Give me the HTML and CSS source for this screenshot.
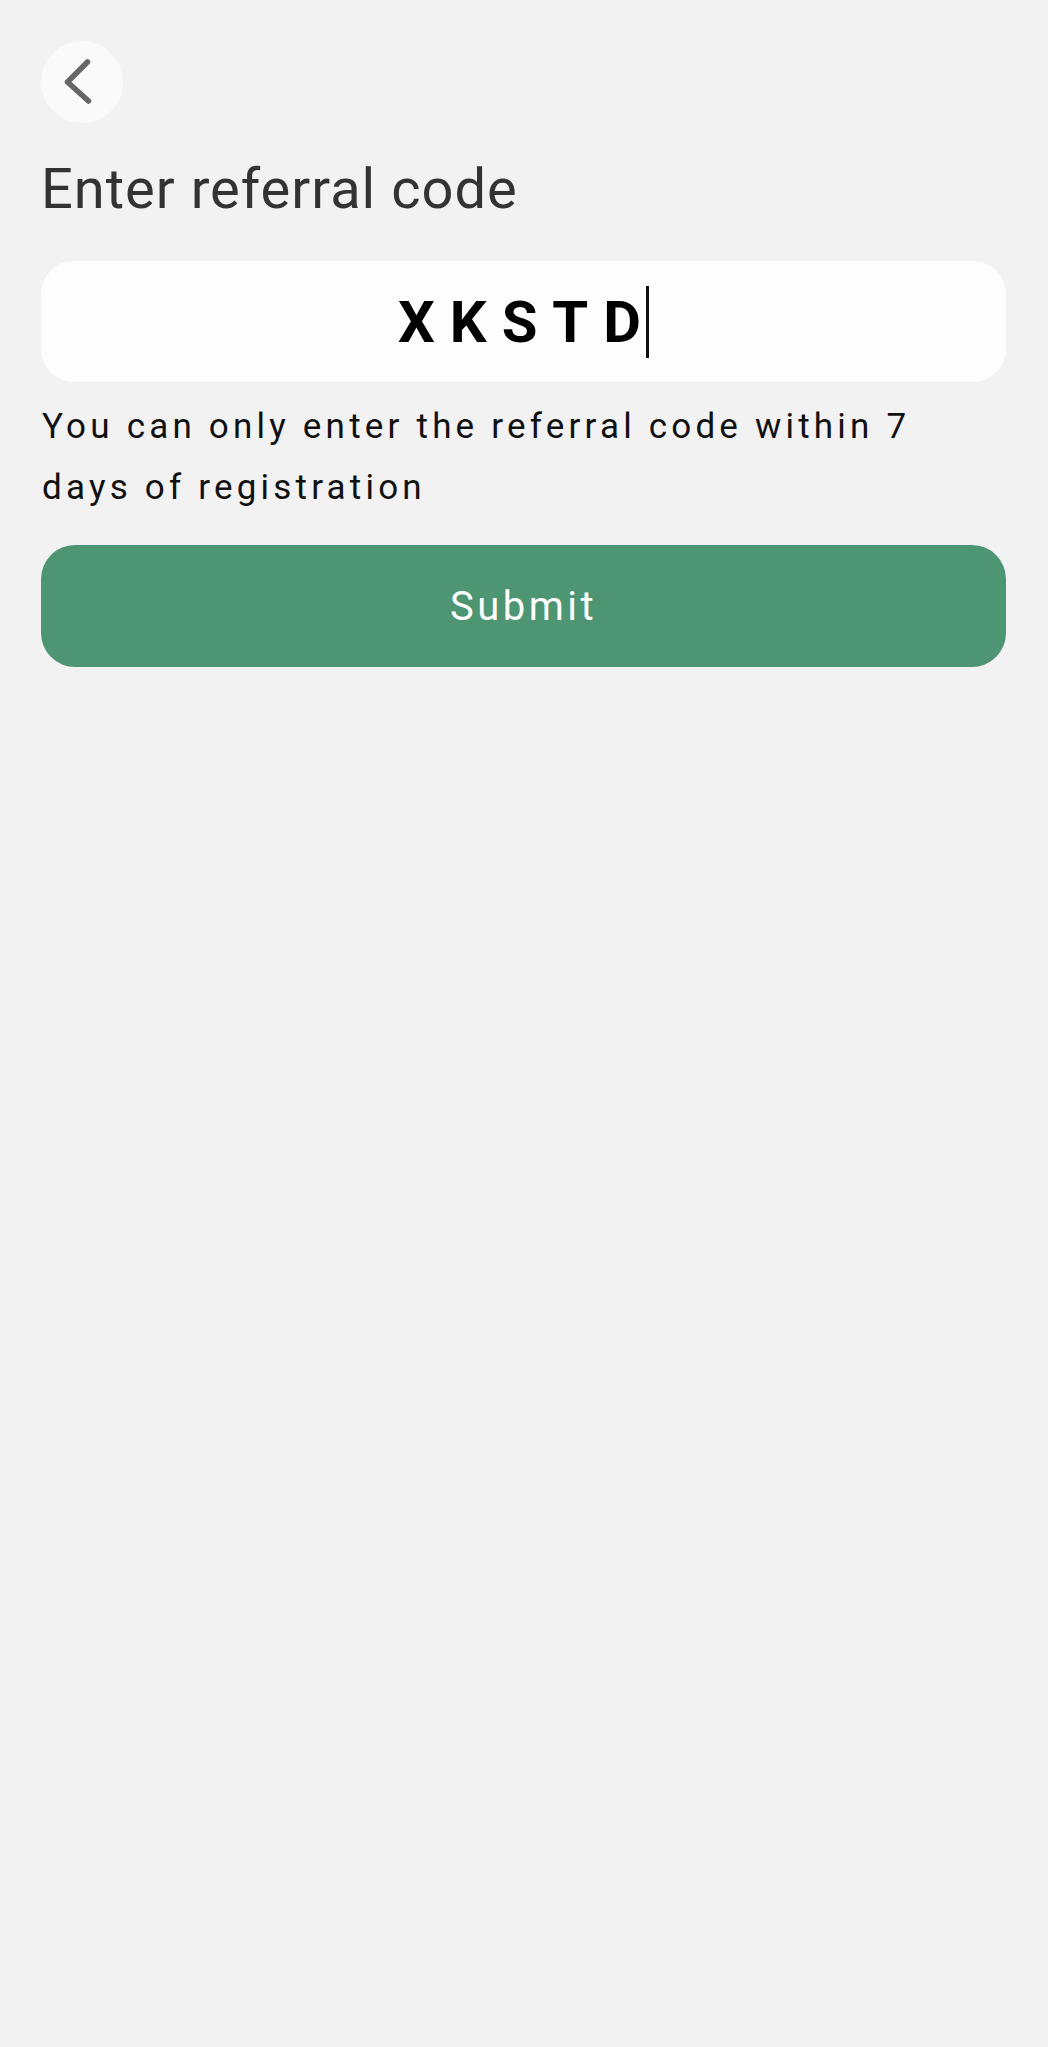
FILE: index.html
```html
<!DOCTYPE html>
<html lang="en">
<head>
<meta charset="utf-8">
<title>Enter referral code</title>
<link rel="stylesheet" href="styles.css">
</head>
<body>
<div class="page">
  <button class="back" type="button" aria-label="Back">
    <svg width="82" height="82" viewBox="0 0 82 82" aria-hidden="true">
      <path d="M46.5 21 L26.5 41 L47.5 60" fill="none" stroke="#666" stroke-width="5.5" stroke-linecap="round" stroke-linejoin="round"/>
    </svg>
  </button>
  <h1 class="title">Enter referral code</h1>
  <div class="code-box">
    <span class="code">XKSTD</span><span class="caret"></span>
  </div>
  <p class="hint">You can only enter the referral code within 7 days of registration</p>
  <button class="submit" type="button">Submit</button>
</div>
</body>
</html>
```

FILE: styles.css
```css
html, body {
  margin: 0;
  padding: 0;
  background: #f2f2f2;
}
body {
  font-family: Roboto, "Liberation Sans", Arial, sans-serif;
  min-height: 2047px;
}
.page {
  padding: 41px 42px 0 41px;
  display: flex;
  flex-direction: column;
}
.back {
  width: 82px;
  height: 82px;
  border-radius: 50%;
  border: 0;
  padding: 0;
  background: #fafafa;
  display: flex;
  align-items: center;
  justify-content: center;
}
.title {
  margin: 32px 0 0 0;
  font-size: 56px;
  font-weight: 400;
  line-height: 68px;
  color: #333;
  letter-spacing: 1px;
}
.code-box {
  margin-top: 38px;
  height: 121px;
  border-radius: 33px;
  background: #fdfdfd;
  display: flex;
  align-items: center;
  justify-content: center;
}
.code {
  font-size: 58px;
  font-weight: 700;
  letter-spacing: 15px;
  color: #000;
  line-height: 1;
  margin-right: -10px;
}
.caret {
  width: 3px;
  height: 72px;
  background: #111;
}
.hint {
  margin: 14px 0 0 1px;
  max-width: 930px;
  font-size: 35px;
  line-height: 61px;
  color: #111;
  letter-spacing: 4.2px;
}
.submit {
  margin-top: 27px;
  height: 122px;
  border: 0;
  border-radius: 34px;
  background: #4d9573;
  color: #fff;
  font-family: Roboto, "Liberation Sans", Arial, sans-serif;
  font-size: 40px;
  font-weight: 400;
  letter-spacing: 3.5px;
}
```
